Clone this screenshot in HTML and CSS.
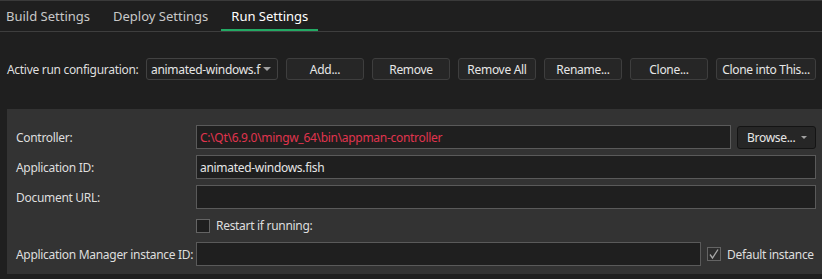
FILE: index.html
```html
<!DOCTYPE html>
<html>
  <head>
    <title>Run Settings</title>
    <link rel="stylesheet" href="styles.css">
  </head>
  <body>
    <div class="tab-bar">
      <div class="tab tab-first">Build Settings</div>
      <div class="tab">Deploy Settings</div>
      <div class="tab tab-active">Run Settings</div>
    </div>

    <div class="config-row">
      <span class="config-label">Active run configuration:</span>
      <div class="combo">
        <span class="combo-text">animated-windows.f</span>
        <span class="arrow"></span>
      </div>
      <button class="tool-button">Add...</button>
      <button class="tool-button">Remove</button>
      <button class="tool-button">Remove All</button>
      <button class="tool-button">Rename...</button>
      <button class="tool-button">Clone...</button>
      <button class="tool-button wide">Clone into This...</button>
    </div>

    <div class="panel">
      <div class="form-grid">
        <label class="field-label">Controller:</label>
        <div class="field-line">
          <div class="text-input error">C:\Qt\6.9.0\mingw_64\bin\appman-controller</div>
          <button class="browse-button">Browse... <span class="arrow small"></span></button>
        </div>

        <label class="field-label">Application ID:</label>
        <div class="text-input">animated-windows.fish</div>

        <label class="field-label">Document URL:</label>
        <div class="text-input"></div>

        <span></span>
        <div class="check-line">
          <span class="check-box"></span>
          <span>Restart if running:</span>
        </div>

        <label class="field-label">Application Manager instance ID:</label>
        <div class="field-line">
          <div class="text-input"></div>
          <div class="check-line default-check">
            <span class="check-box checked">
              <svg width="12" height="12" viewBox="0 0 12 12">
                <path d="M2 6.5 L4.5 10 L10 1.5" fill="none" stroke="#a8a8a8" stroke-width="1.3"/>
              </svg>
            </span>
            <span>Default instance</span>
          </div>
        </div>
      </div>
    </div>
  </body>
</html>
```

FILE: styles.css
```css
body {
  margin: 0;
  background-color: rgb(31, 31, 31);
  color: rgb(222, 222, 222);
  font-family: "Noto Sans", "Open Sans", sans-serif;
  font-size: 12px;
  letter-spacing: -0.3px;
  white-space: nowrap;
  border-top: 1px solid rgb(58, 58, 58);
}

.tab-bar {
  display: flex;
  height: 30px;
  border-bottom: 1px solid rgb(62, 62, 62);
}
.tab {
  display: flex;
  align-items: center;
  padding: 0 10px;
  margin-right: 3px;
  font-size: 13px;
  letter-spacing: 0;
  color: rgb(200, 200, 200);
  box-sizing: border-box;
}
.tab-first {
  padding-left: 6px;
}
.tab-active {
  color: white;
  border-bottom: 2px solid rgb(35, 170, 100);
  padding-top: 2px;
}

.config-row {
  display: flex;
  align-items: center;
  gap: 8px;
  margin: 26px 0 0 7px;
  height: 22px;
}
.config-label {
  flex-shrink: 0;
  width: 131px;
}
.combo {
  display: flex;
  align-items: center;
  justify-content: space-between;
  flex-shrink: 0;
  width: 132px;
  height: 22px;
  box-sizing: border-box;
  padding: 0 6px 0 4px;
  background-color: rgb(33, 33, 33);
  border: 1px solid rgb(66, 66, 66);
  border-radius: 3px;
  color: rgb(230, 230, 230);
}
.combo-text {
  overflow: hidden;
  width: 110px;
}
.arrow {
  width: 0;
  height: 0;
  border-left: 4px solid transparent;
  border-right: 4px solid transparent;
  border-top: 4px solid rgb(160, 160, 160);
}
.arrow.small {
  border-left-width: 3px;
  border-right-width: 3px;
  border-top-width: 3px;
}

.tool-button {
  flex-shrink: 0;
  width: 78px;
  height: 22px;
  padding: 0;
  font-family: inherit;
  font-size: 12px;
  letter-spacing: -0.3px;
  color: rgb(230, 230, 230);
  background-color: rgb(38, 38, 38);
  border: 1px solid rgb(62, 62, 62);
  border-radius: 3px;
}
.tool-button.wide {
  width: 100px;
}

.panel {
  margin: 29px 0 0 7px;
  height: 165px;
  box-sizing: border-box;
  padding: 16px 6px 0 9px;
  background-color: rgb(51, 51, 51);
}
.form-grid {
  display: grid;
  grid-template-columns: 180px 1fr;
  row-gap: 6px;
  align-items: center;
}
.field-label {
  color: rgb(222, 222, 222);
}
.field-line {
  display: flex;
  align-items: center;
  gap: 6px;
}
.text-input {
  flex: 1;
  height: 24px;
  box-sizing: border-box;
  padding: 0 3px;
  display: flex;
  align-items: center;
  background-color: rgb(31, 31, 31);
  border: 1px solid rgb(90, 90, 90);
  color: rgb(230, 230, 230);
}
.text-input.error {
  color: rgb(224, 52, 78);
}
.browse-button {
  display: flex;
  align-items: center;
  justify-content: space-between;
  flex-shrink: 0;
  width: 79px;
  height: 23px;
  box-sizing: border-box;
  padding: 0 8px 0 9px;
  font-family: inherit;
  font-size: 12px;
  letter-spacing: -0.3px;
  color: rgb(230, 230, 230);
  background-color: rgb(38, 38, 38);
  border: 1px solid rgb(20, 20, 20);
  border-radius: 3px;
}

.check-line {
  display: flex;
  align-items: center;
  gap: 6px;
  height: 21px;
}
.check-box {
  display: flex;
  align-items: center;
  justify-content: center;
  flex-shrink: 0;
  width: 14px;
  height: 14px;
  box-sizing: border-box;
  background-color: rgb(31, 31, 31);
  border: 1px solid rgb(100, 100, 100);
}
.check-box.checked {
  background-color: rgb(45, 45, 45);
}
.default-check {
  flex-shrink: 0;
  width: 109px;
}
```
